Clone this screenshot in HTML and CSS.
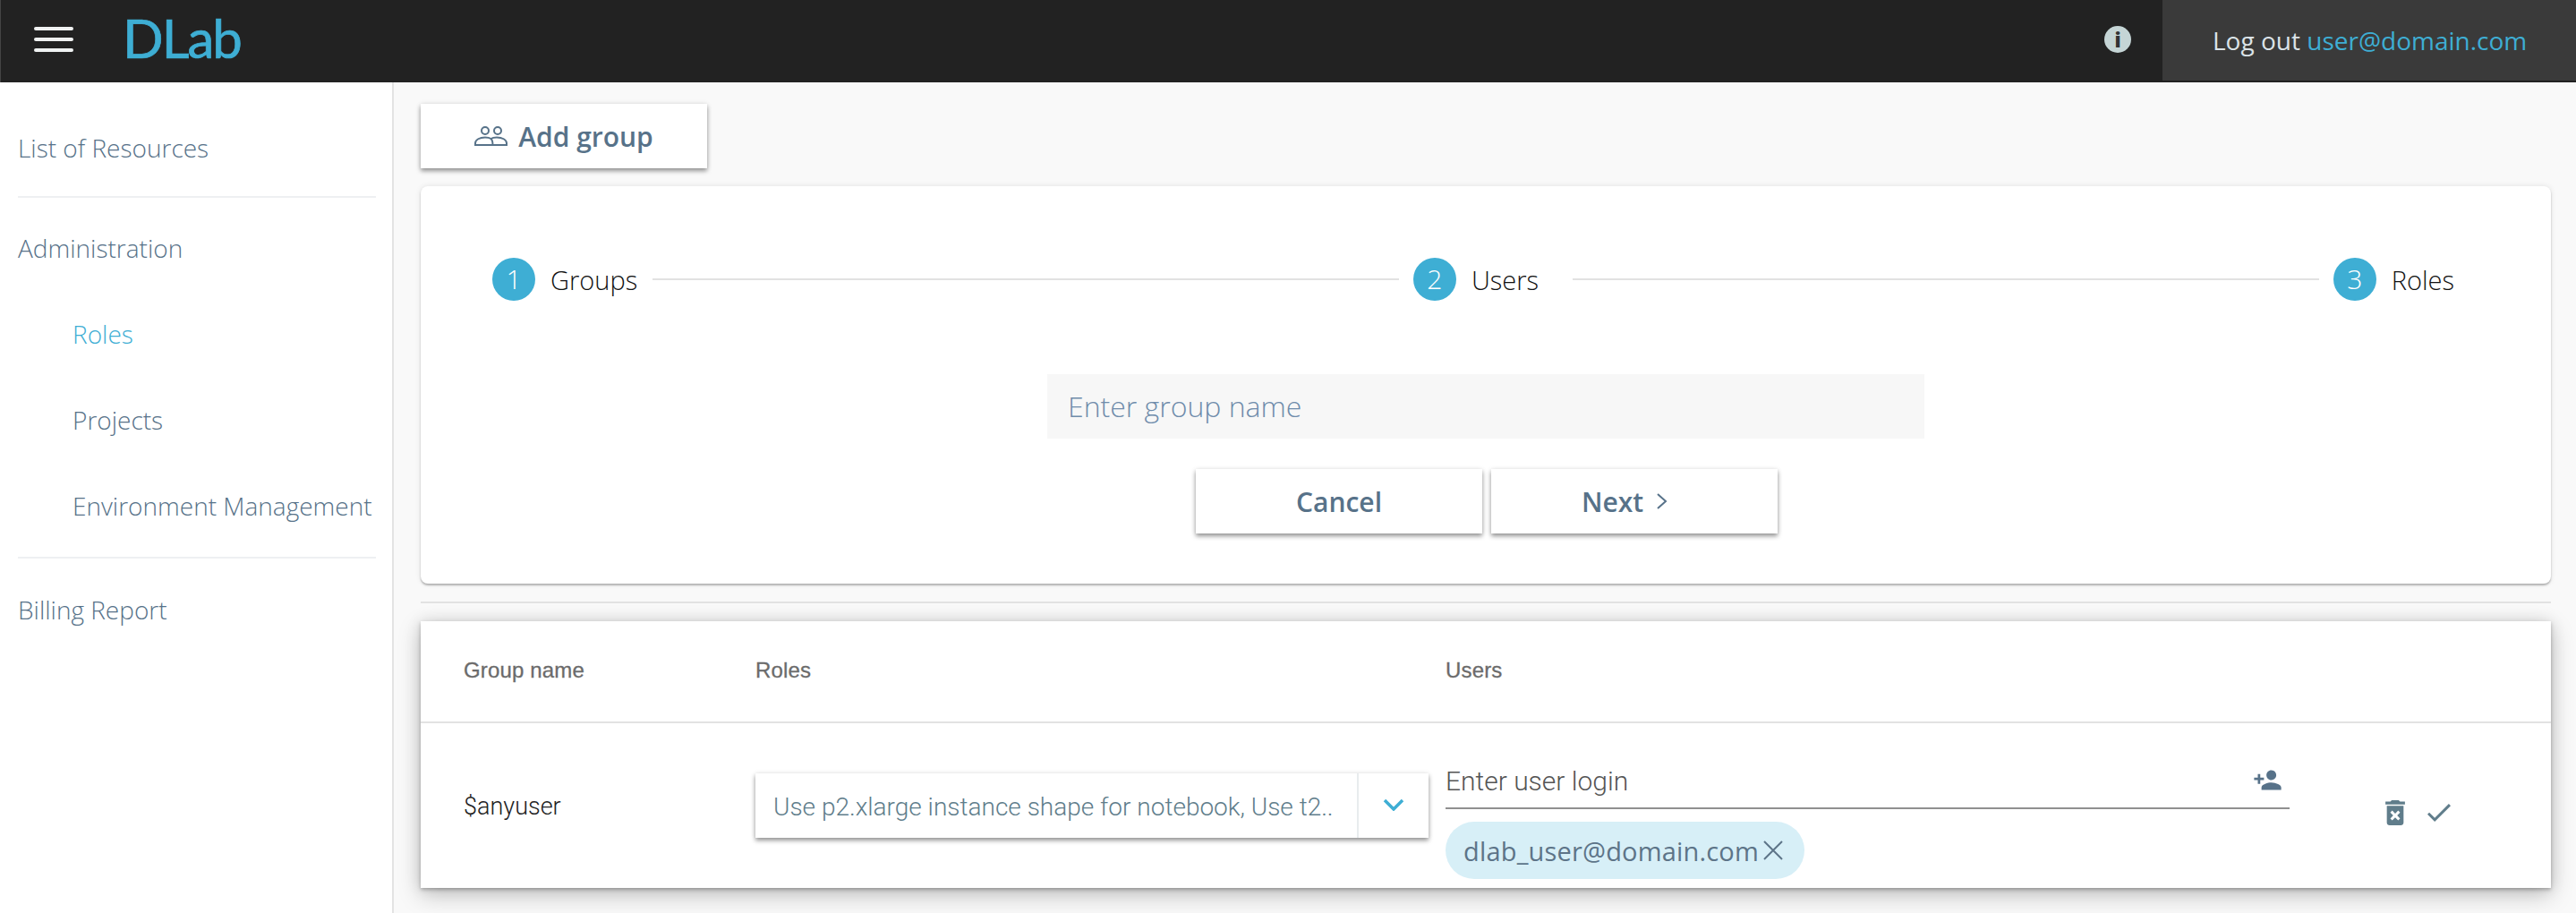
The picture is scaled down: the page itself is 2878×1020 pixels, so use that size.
FILE: index.html
```html
<!DOCTYPE html>
<html lang="en">
<head>
<meta charset="utf-8">
<title>DLab - Roles</title>
<link rel="stylesheet" href="styles.css">
</head>
<body>
<header class="topbar">
  <button class="burger" aria-label="Menu"><span></span><span></span><span></span></button>
  <div class="logo">DLab</div>
  <div class="top-right">
    <div class="info-icon">i</div>
    <div class="account">Log out <a class="email">user@domain.com</a></div>
  </div>
</header>
<div class="layout">
  <nav class="sidebar">
    <a class="nav-item">List of Resources</a>
    <hr class="nav-divider nav-divider-top">
    <a class="nav-item">Administration</a>
    <a class="nav-item sub active">Roles</a>
    <a class="nav-item sub">Projects</a>
    <a class="nav-item sub">Environment Management</a>
    <hr class="nav-divider nav-divider-bottom">
    <a class="nav-item">Billing Report</a>
  </nav>
  <main class="content">
    <button class="btn btn-add">
      <svg class="icon-group" viewBox="0 0 37 22" fill="none" stroke="#577289" stroke-width="2"><circle cx="12" cy="5" r="4"/><circle cx="26" cy="5" r="4"/><path d="M1 21v-2c0-4 5-6.500 11-6.500 3 0 5.200 .6 6.500 1.500 1.300-.9 3.500-1.500 6.500-1.500 6 0 11 2.500 11 6.500v2H1zM18.500 14c1.500 1.200 2 3 2 7"/></svg>
      Add group
    </button>
    <section class="card form-card">
      <div class="stepper">
        <div class="step"><span class="step-num">1</span><span class="step-label">Groups</span></div>
        <div class="step-line"></div>
        <div class="step step-middle"><span class="step-num">2</span><span class="step-label">Users</span></div>
        <div class="step-line"></div>
        <div class="step"><span class="step-num">3</span><span class="step-label">Roles</span></div>
      </div>
      <div class="name-input">Enter group name</div>
      <div class="form-actions">
        <button class="btn btn-form">Cancel</button>
        <button class="btn btn-form btn-next">Next
          <svg class="icon-next" viewBox="0 0 13 18" fill="none" stroke="#577289" stroke-width="2"><path d="M2 1l9 8-9 8"/></svg>
        </button>
      </div>
    </section>
    <hr class="section-line">
    <section class="table-card">
      <div class="table-row table-head">
        <div>Group name</div>
        <div>Roles</div>
        <div>Users</div>
        <div></div>
      </div>
      <div class="table-row table-body">
        <div class="group-name">$anyuser</div>
        <div class="select">
          <span class="select-text">Use p2.xlarge instance shape for notebook, Use t2..</span>
          <span class="select-arrow"><svg class="icon-chevron" viewBox="0 0 24 14" fill="none" stroke="#3eaed4" stroke-width="3.500"><path d="M2 2l10 10L22 2"/></svg></span>
        </div>
        <div class="users-cell">
          <div class="user-input">
            <span class="user-placeholder">Enter user login</span>
            <svg class="icon-person" viewBox="0 0 24 24" fill="#577289"><path d="M15 12c2.210 0 4-1.790 4-4s-1.790-4-4-4-4 1.790-4 4 1.790 4 4 4zm-9-2V7H4v3H1v2h3v3h2v-3h3v-2H6zm9 4c-2.670 0-8 1.340-8 4v2h16v-2c0-2.660-5.330-4-8-4z"/></svg>
          </div>
          <div class="chip">
            <span>dlab_user@domain.com</span>
            <svg class="icon-close" viewBox="0 0 24 22" fill="none" stroke="#5d7488" stroke-width="2"><path d="M2 1l20 20M22 1L2 21"/></svg>
          </div>
        </div>
        <div class="actions">
          <svg class="icon-trash" viewBox="5 3 14 18" fill="#607d8b"><path d="M6 19c0 1.100 .9 2 2 2h8c1.100 0 2-.9 2-2V7H6v12zm2.460-7.120l1.410-1.410L12 12.590l2.120-2.120 1.410 1.410L13.410 14l2.120 2.120-1.410 1.410L12 15.410l-2.120 2.120-1.410-1.410L10.590 14l-2.130-2.120zM15.500 4l-1-1h-5l-1 1H5v2h14V4z"/></svg>
          <svg class="icon-check" viewBox="3.500 5.600 17.500 13.400" fill="#607d8b"><path d="M21 7L9 19l-5.500-5.500 1.410-1.410L9 16.170 19.590 5.590 21 7z"/></svg>
        </div>
      </div>
    </section>
  </main>
</div>
</body>
</html>
```

FILE: styles.css
```css
* { box-sizing: border-box; }
html, body { margin: 0; height: 100%; }
body {
  display: flex;
  flex-direction: column;
  height: 1020px;
  overflow: hidden;
  background: #f9f9f9;
  font-family: "Open Sans", sans-serif;
  color: #577289;
}
button { font-family: inherit; border: 0; background: none; padding: 0; }
hr { border: 0; margin: 0; }

/* Top bar */
.topbar {
  flex: 0 0 92px;
  display: flex;
  align-items: flex-start;
  background: #222;
  border-left: 1px solid #444;
}
.burger {
  display: flex;
  flex-direction: column;
  gap: 8px;
  width: 44px;
  margin: 30px 0 0 37px;
}
.burger span { height: 4px; border-radius: 2px; background: #f0f2f2; }
.logo {
  margin: 6px 0 0 55px;
  font-family: "Lato", sans-serif;
  font-size: 60px;
  line-height: 72px;
  letter-spacing: -2px;
  color: #3eaed4;
  -webkit-text-stroke: .7px #3eaed4;
}
.top-right {
  margin-left: auto;
  display: flex;
  align-items: flex-start;
}
.info-icon {
  width: 30px;
  height: 30px;
  margin: 29px 35px 0 0;
  border-radius: 50%;
  background: #c5d5d6;
  color: #333;
  font-family: "Open Sans", sans-serif;
  font-weight: 800;
  font-size: 22px;
  line-height: 30px;
  text-align: center;
}
.account {
  width: 462px;
  height: 90px;
  padding-left: 56px;
  background: #3a3a3a;
  color: #dbe3e8;
  font-size: 28px;
  line-height: 90px;
}
.email { color: #3eaed4; }

/* Layout */
.layout { flex: 1; display: flex; min-height: 0; }
.sidebar {
  flex: 0 0 440px;
  padding: 25px 18px 0 20px;
  background: #fff;
  border-right: 2px solid #e3e3e3;
}
.nav-item {
  display: block;
  height: 96px;
  line-height: 96px;
  font-size: 28px;
  font-weight: 300;
  color: #577289;
  white-space: nowrap;
}
.nav-item.sub { padding-left: 61px; }
.nav-item.active { color: #3eaed4; }
.nav-divider { height: 2px; background: #eef0f2; }
.nav-divider-top { margin: 6px 0 8px; }
.nav-divider-bottom { margin: 9px 0; }

.content { flex: 1; padding: 24px 28px 0 30px; min-width: 0; }

/* Buttons */
.btn {
  display: flex;
  align-items: center;
  justify-content: center;
  height: 72px;
  background: #fff;
  color: #577289;
  font-size: 30px;
  font-weight: 600;
  box-shadow: 0 3px 5px rgba(0, 0, 0, .4), 0 0 6px rgba(0, 0, 0, .08);
}
.btn-add { width: 320px; gap: 12px; }
.icon-group { width: 37px; height: 22px; }
.btn-form { width: 320px; gap: 14px; }
.btn-next { padding-right: 22px; }
.icon-next { width: 13px; height: 18px; }

/* Form card */
.card {
  background: #fff;
  border-radius: 8px;
}
.form-card {
  margin-top: 20px;
  height: 444px;
  padding-top: 80px;
  box-shadow: 0 2px 2px rgba(0, 0, 0, .25), 0 0 6px rgba(0, 0, 0, .1);
}
.stepper { display: flex; align-items: center; height: 48px; padding: 0 108px 0 80px; }
.step { display: flex; align-items: center; gap: 17px; }
.step-middle { margin-right: 21px; }
.step-num {
  width: 48px;
  height: 48px;
  border-radius: 50%;
  background: #3eaed4;
  color: #fff;
  font-weight: 300;
  font-size: 30px;
  line-height: 48px;
  text-align: center;
}
.step-label { font-size: 29px; font-weight: 300; color: #111; }
.step-line { flex: 1; height: 2px; margin: 0 16px 0 17px; background: #e2e2e2; }
.name-input {
  width: 980px;
  height: 72px;
  margin: 82px auto 0;
  padding-left: 23px;
  background: #f7f7f7;
  color: #6f8cab;
  font-size: 32px;
  font-weight: 300;
  line-height: 72px;
}
.form-actions { display: flex; justify-content: center; gap: 10px; margin: 34px 0 0 2px; }

.section-line { height: 2px; margin: 20px 0; background: #e2e2e2; }

/* Table */
.table-card {
  background: #fff;
  box-shadow: 0 8px 24px rgba(0, 0, 0, .22), 0 2px 4px rgba(0, 0, 0, .25), 0 0 16px rgba(0, 0, 0, .1);
  font-family: "Roboto", sans-serif;
}
.table-row {
  display: grid;
  grid-template-columns: 326px 771px 943px 1fr;
  padding-left: 48px;
  align-items: center;
}
.table-head {
  height: 114px;
  padding-bottom: 2px;
  border-bottom: 2px solid #e2e2e2;
  font-family: "Liberation Sans", sans-serif;
  font-size: 24px;
  letter-spacing: .15px;
  color: #6b6b6b;
  -webkit-text-stroke: .3px #6b6b6b;
}
.table-body { height: 184px; }
.group-name { padding-top: 2px; font-size: 27px; font-weight: 300; color: #222; }
.select {
  display: flex;
  width: 752px;
  height: 72px;
  background: #fff;
  box-shadow: 0 3px 5px rgba(0, 0, 0, .4), 0 0 6px rgba(0, 0, 0, .08);
}
.select-text {
  flex: 0 0 672px;
  padding-left: 20px;
  font-size: 28px;
  font-weight: 300;
  line-height: 76px;
  color: #607d8b;
  white-space: nowrap;
  overflow: hidden;
}
.select-arrow {
  flex: 1;
  display: flex;
  align-items: center;
  justify-content: center;
  padding-bottom: 2px;
  border-left: 2px solid #e8ecee;
}
.icon-chevron { width: 24px; height: 14px; }
.users-cell { width: 943px; }
.user-input {
  display: flex;
  align-items: center;
  justify-content: space-between;
  height: 86px;
  padding: 33px 8px 11px 0;
  border-bottom: 2px solid #909090;
  font-size: 30px;
  font-weight: 300;
  color: #555;
}
.user-placeholder { padding-top: 2px; }
.icon-person { width: 33px; height: 33px; }
.chip {
  display: inline-flex;
  align-items: center;
  gap: 4px;
  height: 64px;
  margin-top: 14px;
  padding: 0 23px 0 20px;
  border-radius: 32px;
  background: #d7eff7;
  font-family: "Open Sans", sans-serif;
  font-size: 29px;
  letter-spacing: .18px;
  color: #5d7488;
}
.icon-close { width: 24px; height: 22px; }
.actions {
  display: flex;
  align-items: center;
  gap: 25px;
  padding: 16px 0 0 107px;
}
.icon-trash { width: 22px; height: 28px; }
.icon-check { width: 26px; height: 20px; }
```
